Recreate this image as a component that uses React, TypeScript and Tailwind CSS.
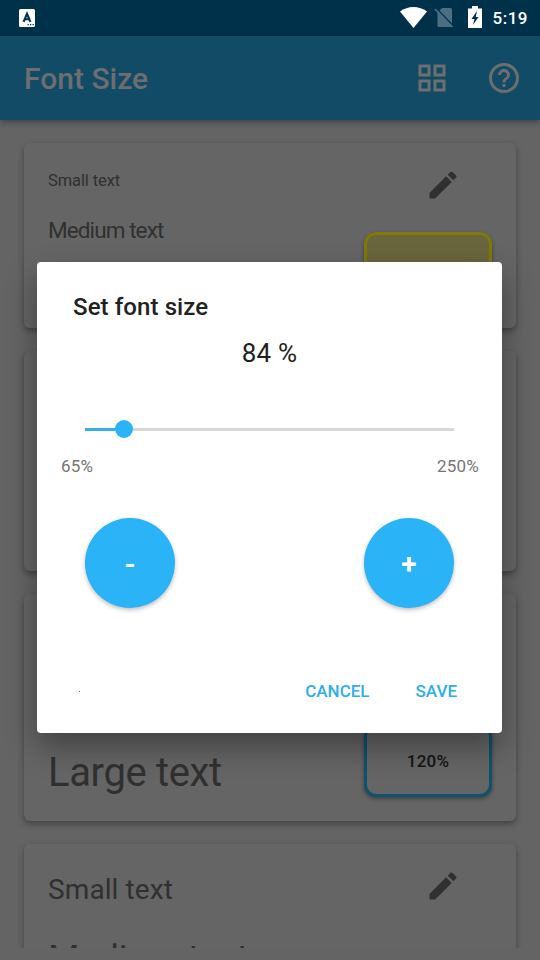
import type { ReactNode } from 'react'
import { MdEdit, MdGridView, MdHelpOutline } from 'react-icons/md'

function StatusBar() {
  return (
    <div className="flex h-9 shrink-0 items-center bg-[#00314b] text-white">
      <svg className="ml-[19px]" width="16" height="18" viewBox="0 0 16 18">
        <rect width="16" height="18" rx="1.5" fill="#fff" />
        <path d="M4.6 12.8 8 4.8l3.4 8M6 10.3h4" fill="none" stroke="#00314b" strokeWidth="2.1" />
        <path d="M8.5 15.7h1.3M11 15.7h1.3M13.5 15.7h1.3" stroke="#00314b" strokeWidth="1.2" />
      </svg>
      <div className="ml-auto flex items-center pr-3">
        <svg className="-translate-y-px" width="27" height="21" viewBox="0 0 27 21">
          <path d="M0 4.6C7.8-1.5 19.2-1.5 27 4.6L13.5 21Z" fill="#fff" />
        </svg>
        <svg className="ml-[7px]" width="21" height="22" viewBox="0 0 21 22">
          <path d="M8 1h8.5q1.5 0 1.5 1.5V19q0 1-1 1H5q-1.5 0-1.5-1.5V5.500Z" fill="#4b6f82" />
          <path d="m2 1 18 18.500" stroke="#00314b" strokeWidth="1.500" />
          <path d="m1 2 17.500 18" stroke="#4b6f82" strokeWidth="1.600" />
        </svg>
        <svg className="ml-[13px] -translate-y-px" width="14" height="22" viewBox="0 0 14 22">
          <path d="M4 0h6v2.5h4V22H0V2.5h4Z" fill="#fff" />
          <path d="M9 5 3.5 13h3L5 19l5.5-8H7.8Z" fill="#00314b" />
        </svg>
        <span className="ml-[11px] text-[17px] font-medium leading-none tracking-[0.5px]">5:19</span>
      </div>
    </div>
  )
}

function Header() {
  return (
    <header className="z-10 flex h-[84px] shrink-0 items-center bg-[#124b65] px-6 text-[#6c6e6f] shadow-[0_2px_6px_rgba(0,0,0,0.35)]">
      <h1 className="pt-0.5 text-[30px] font-medium leading-none">Font Size</h1>
      <div className="-mr-1.5 ml-auto flex gap-9">
        <MdGridView size={36} />
        <MdHelpOutline size={36} />
      </div>
    </header>
  )
}

function Card({ className, value, children }: { className: string; value?: ReactNode; children?: ReactNode }) {
  return (
    <section
      className={`flex shrink-0 justify-between rounded-md bg-[#656565] px-6 shadow-[0_3px_6px_rgba(0,0,0,0.35)] ${className}`}
    >
      <div className="flex flex-col whitespace-nowrap text-[#303030]">{children}</div>
      <div className="flex w-32 flex-col justify-between pb-6 pt-6">
        <MdEdit className="ml-[61px] text-[#303030]" size={36} />
        {value}
      </div>
    </section>
  )
}

function SizeButton({ className, label }: { className: string; label: string }) {
  return (
    <button
      className={`h-[72px] shrink-0 rounded-xl border-[3px] pt-0.5 text-[17px] font-medium tracking-[0.2px] text-[#141414] shadow-[0_2px_4px_rgba(0,0,0,0.35)] ${className}`}
    >
      {label}
    </button>
  )
}

function RoundButton({ label }: { label: string }) {
  return (
    <button className="flex size-[90px] items-center justify-center rounded-full bg-[#2ab3f6] pt-[3px] text-[28px] font-bold text-white shadow-[0_2px_4px_rgba(0,0,0,0.25)]">
      {label}
    </button>
  )
}

function FontSizeDialog() {
  return (
    <div className="absolute left-[37px] top-[262px] z-20 flex h-[471px] w-[465px] flex-col rounded bg-white text-[#212121] shadow-[0_14px_30px_rgba(0,0,0,0.35)]">
      <h2 className="mt-[30px] pl-9 text-2xl font-medium leading-[30px] tracking-[0.1px]">Set font size</h2>
      <div className="mt-4 text-center text-[26px] leading-[30px] tracking-[0.2px]">84 %</div>
      {/* Slider */}
      <div className="mx-12 mt-[52px] flex h-[18px] items-center">
        <div className="h-[3px] w-[29.5px] bg-[#35aee5]" />
        <div className="size-[18px] rounded-full bg-[#2ab3f6]" />
        <div className="h-[3px] grow bg-[#d8d8d8]" />
      </div>
      <div className="mt-4 flex justify-between px-6 pr-[23px] text-[17px] leading-6 tracking-[0.2px] text-[#757575]">
        <span>65%</span>
        <span>250%</span>
      </div>
      <div className="mt-10 flex justify-between px-12">
        <RoundButton label="-" />
        <RoundButton label="+" />
      </div>
      {/* Actions */}
      <div className="mt-[71px] flex items-center pl-[42px] pr-[45px] text-[17px] font-medium leading-6 text-[#2eaeea]">
        <span className="size-px bg-[#2896c9]" />
        <button className="ml-auto">CANCEL</button>
        <button className="ml-[46px]">SAVE</button>
      </div>
    </div>
  )
}

export default function App() {
  return (
    <div className="relative flex h-[960px] w-[540px] flex-col overflow-hidden bg-[#646464] font-[Roboto,sans-serif]">
      <StatusBar />
      <Header />
      <main className="flex h-[828px] shrink-0 flex-col gap-[23px] overflow-hidden px-6 pt-[23px]">
        <Card
          className="h-[185px]"
          value={<SizeButton className="border-[#7f7908] bg-[#69653d]" label="84%" />}
        >
          <span className="mt-[26px] text-[16.5px] leading-6 tracking-[-0.1px]">Small text</span>
          <span className="mt-[23px] text-[22.5px] leading-7 tracking-[-0.9px]">Medium text</span>
        </Card>
        <Card className="h-[220px]" />
        <Card
          className="h-[227px]"
          value={<SizeButton className="border-[#10526c] bg-[#656565]" label="120%" />}
        >
          <span className="mb-[23px] mt-auto text-[40px] leading-[50px] tracking-[-0.35px]">Large text</span>
        </Card>
        <Card className="h-[300px]">
          <span className="mt-[30px] text-[28px] leading-8 tracking-[0.1px]">Small text</span>
          <span className="mt-[29px] text-[36px] leading-[48px]">Medium text</span>
        </Card>
      </main>
      <FontSizeDialog />
    </div>
  )
}
